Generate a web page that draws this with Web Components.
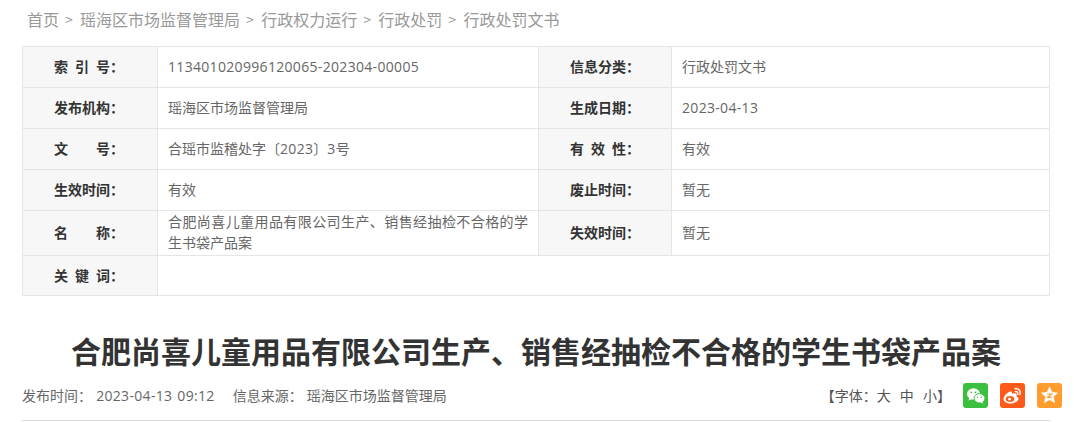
<!DOCTYPE html>
<html lang="zh-CN">
<head>
<meta charset="UTF-8">
<title>行政处罚文书</title>
<style>
  body { margin: 0; background: #fff; font-family: "Noto Sans CJK SC", "Liberation Sans", sans-serif; }
</style>
</head>
<body>

<template id="crumb-bar-template">
  <style>
    :host { display: flex; align-items: center; height: 38px; padding-left: 27px; box-sizing: border-box; margin-bottom: 8px; font-size: 16px; color: #999; white-space: pre; }
    ::slotted(span) { margin-right: 6px; }
    ::slotted(i) { font-style: normal; margin-right: 7.3px; font-size: 14px; }
  </style>
  <slot></slot>
</template>

<template id="info-table-template">
  <style>
    :host { display: block; margin: 0 24px 0 22px; }
    .grid {
      display: grid;
      grid-template-columns: 135px 381px 133px 378px;
      grid-template-rows: 41px 41px 41px 41px 45px 40px;
      border-top: 1px solid #e5e5e5;
      border-left: 1px solid #e5e5e5;
      box-sizing: border-box;
      width: 1028px;
    }
  </style>
  <div class="grid"><slot></slot></div>
</template>

<template id="info-item-template">
  <style>
    :host { display: contents; }
    .k, .v { border-right: 1px solid #e5e5e5; border-bottom: 1px solid #e5e5e5; font-size: 14px; display: flex; align-items: center; box-sizing: border-box; padding-bottom: 2px; }
    .k { background: #f7f7f7; color: #333; font-weight: bold; padding-left: 31px; white-space: pre; }
    .t { display: block; width: 56px; text-align: justify; text-align-last: justify; white-space: normal; }
    .v { color: #666; padding-left: 10px; padding-right: 10px; line-height: 21px; text-align: justify; }
    :host([wide]) .v { grid-column: span 3; }
  </style>
  <div class="k"><span class="t"></span>：</div>
  <div class="v"><span><slot></slot></span></div>
</template>

<template id="page-title-template">
  <style>
    :host { display: block; margin: 31px 24px 0 22px; text-align: center; font-size: 30px; line-height: 46px; font-weight: bold; color: #333; }
  </style>
  <slot></slot>
</template>

<template id="meta-bar-template">
  <style>
    :host { display: flex; align-items: center; justify-content: space-between; width: 1040px; margin: 7px 0 0 22px; height: 30px; font-size: 14px; color: #666; white-space: pre; }
    .left { display: flex; gap: 18px; word-spacing: 1px; }
    .right { display: flex; align-items: center; }
    .size { margin-right: 12px; color: #555; word-spacing: 6px; }
    .icons { display: flex; gap: 12px; }
  </style>
  <div class="left"><slot name="left"></slot></div>
  <div class="right">
    <div class="size"><slot name="size"></slot></div>
    <div class="icons"><slot name="icons"></slot></div>
  </div>
</template>

<crumb-bar>
  <span>首页</span><i>&gt;</i><span>瑶海区市场监督管理局</span><i>&gt;</i><span>行政权力运行</span><i>&gt;</i><span>行政处罚</span><i>&gt;</i><span>行政处罚文书</span>
</crumb-bar>

<info-table>
  <info-item label="索 引 号"><num-text>113401020996120065-202304-00005</num-text></info-item>
  <info-item label="信息分类">行政处罚文书</info-item>
  <info-item label="发布机构">瑶海区市场监督管理局</info-item>
  <info-item label="生成日期"><num-text>2023-04-13</num-text></info-item>
  <info-item label="文 号">合瑶市监稽处字〔<num-text>2023</num-text>〕<num-text>3</num-text>号</info-item>
  <info-item label="有 效 性">有效</info-item>
  <info-item label="生效时间">有效</info-item>
  <info-item label="废止时间">暂无</info-item>
  <info-item label="名 称">合肥尚喜儿童用品有限公司生产、销售经抽检不合格的学生书袋产品案</info-item>
  <info-item label="失效时间">暂无</info-item>
  <info-item label="关 键 词" wide></info-item>
</info-table>

<page-title>合肥尚喜儿童用品有限公司生产、销售经抽检不合格的学生书袋产品案</page-title>

<meta-bar>
  <span slot="left">发布时间： <num-text>2023-04-13 09:12</num-text></span>
  <span slot="left">信息来源： 瑶海区市场监督管理局</span>
  <span slot="size">【字体：大 中 小】</span>
  <share-icon slot="icons" kind="wechat"></share-icon>
  <share-icon slot="icons" kind="weibo"></share-icon>
  <share-icon slot="icons" kind="qzone"></share-icon>
</meta-bar>

<rule-line></rule-line>

<script>
  function fromTemplate(el, id) {
    el.attachShadow({mode: 'open'});
    el.shadowRoot.appendChild(document.getElementById(id).content.cloneNode(true));
  }

  // icon drawings, 25x25 box
  const ICONS = {
    wechat: {
      bg: '#3bbf3e',
      svg: '<ellipse cx="10.500" cy="11" rx="6.500" ry="5.800" fill="#fff"/><path d="M6.500 14.500l-1 3 3.500-1.500z" fill="#fff"/>' +
        '<ellipse cx="16.500" cy="15.300" rx="5.500" ry="4.700" fill="#fff" stroke="#3bbf3e" stroke-width="1"/><path d="M19 18.500l1.500 2-3-1z" fill="#fff"/>' +
        '<circle cx="8.300" cy="9.300" r=".9" fill="#3bbf3e"/><circle cx="12.500" cy="9.300" r=".9" fill="#3bbf3e"/>' +
        '<circle cx="14.600" cy="14.300" r=".7" fill="#3bbf3e"/><circle cx="18.200" cy="14.300" r=".7" fill="#3bbf3e"/>'
    },
    weibo: {
      bg: '#ff5a1a',
      svg: '<path d="M10.500 20.500c-4 0-7-1.800-7-4.500 0-2.800 3.500-6.500 6.500-7.500 1.800-.5 2.500.6 1.900 2.400 2.300-.9 4-.7 4.600.2.400.7.200 1.400-.2 2.100 1.300.4 2.200 1.200 2.200 2.500 0 2.500-3.600 4.800-8 4.800z" fill="#fff"/>' +
        '<ellipse cx="10" cy="16" rx="4.300" ry="3" fill="#ff5a1a"/><circle cx="9.500" cy="16" r="1.500" fill="#fff"/>' +
        '<path d="M15 5.500c3.500-.5 6 2.500 5 6M15.500 8.500c1.600-.2 2.700 1 2.200 2.800" fill="none" stroke="#fff" stroke-width="1.400" stroke-linecap="round"/>'
    },
    qzone: {
      bg: '#ff9c2e',
      svg: '<path d="M12.500 4l2.400 5.300 5.600.7-4.100 3.800 1.100 5.700-5-2.800-5 2.800 1.100-5.700-4.100-3.800 5.600-.7z" fill="#fff" stroke="#fff" stroke-width=".6" stroke-linejoin="round"/>' +
        '<path d="M10.300 11h4.400l-4 3.400h4.200" fill="none" stroke="#ff9c2e" stroke-width="1.200"/>'
    }
  };

  class CrumbBar extends HTMLElement {
    constructor() { super(); fromTemplate(this, 'crumb-bar-template'); }
  }
  // digits sit in a wider latin font than the CJK text
  class NumText extends HTMLElement {
    constructor() {
      super();
      // no whitespace around the slot: the meta bar is white-space: pre
      this.attachShadow({mode: 'open'}).innerHTML =
        '<style>:host { font-family: "Open Sans", "Liberation Sans", sans-serif; letter-spacing: .32px; }</style><slot></slot>';
    }
  }
  class InfoTable extends HTMLElement {
    constructor() { super(); fromTemplate(this, 'info-table-template'); }
  }
  class InfoItem extends HTMLElement {
    constructor() { super(); fromTemplate(this, 'info-item-template'); }
    connectedCallback() {
      this.shadowRoot.querySelector('.t').textContent = this.getAttribute('label');
    }
  }
  class PageTitle extends HTMLElement {
    constructor() { super(); fromTemplate(this, 'page-title-template'); }
  }
  class MetaBar extends HTMLElement {
    constructor() { super(); fromTemplate(this, 'meta-bar-template'); }
  }
  class ShareIcon extends HTMLElement {
    constructor() {
      super();
      this.attachShadow({mode: 'open'});
    }
    connectedCallback() {
      const icon = ICONS[this.getAttribute('kind')];
      this.shadowRoot.innerHTML =
        '<style>:host { display: block; flex: none; width: 25px; height: 25px; border-radius: 3px; overflow: hidden; background: ' + icon.bg + '; } svg { display: block; width: 25px; height: 25px; }</style>' +
        '<svg viewBox="0 0 25 25">' + icon.svg + '</svg>';
    }
  }
  class RuleLine extends HTMLElement {
    constructor() {
      super();
      this.attachShadow({mode: 'open'}).innerHTML =
        '<style>:host { display: block; width: 1028px; margin: 10px 0 0 22px; border-top: 1px solid #ddd; }</style>';
    }
  }

  customElements.define('crumb-bar', CrumbBar);
  customElements.define('num-text', NumText);
  customElements.define('info-table', InfoTable);
  customElements.define('info-item', InfoItem);
  customElements.define('page-title', PageTitle);
  customElements.define('meta-bar', MetaBar);
  customElements.define('share-icon', ShareIcon);
  customElements.define('rule-line', RuleLine);
</script>
</body>
</html>
